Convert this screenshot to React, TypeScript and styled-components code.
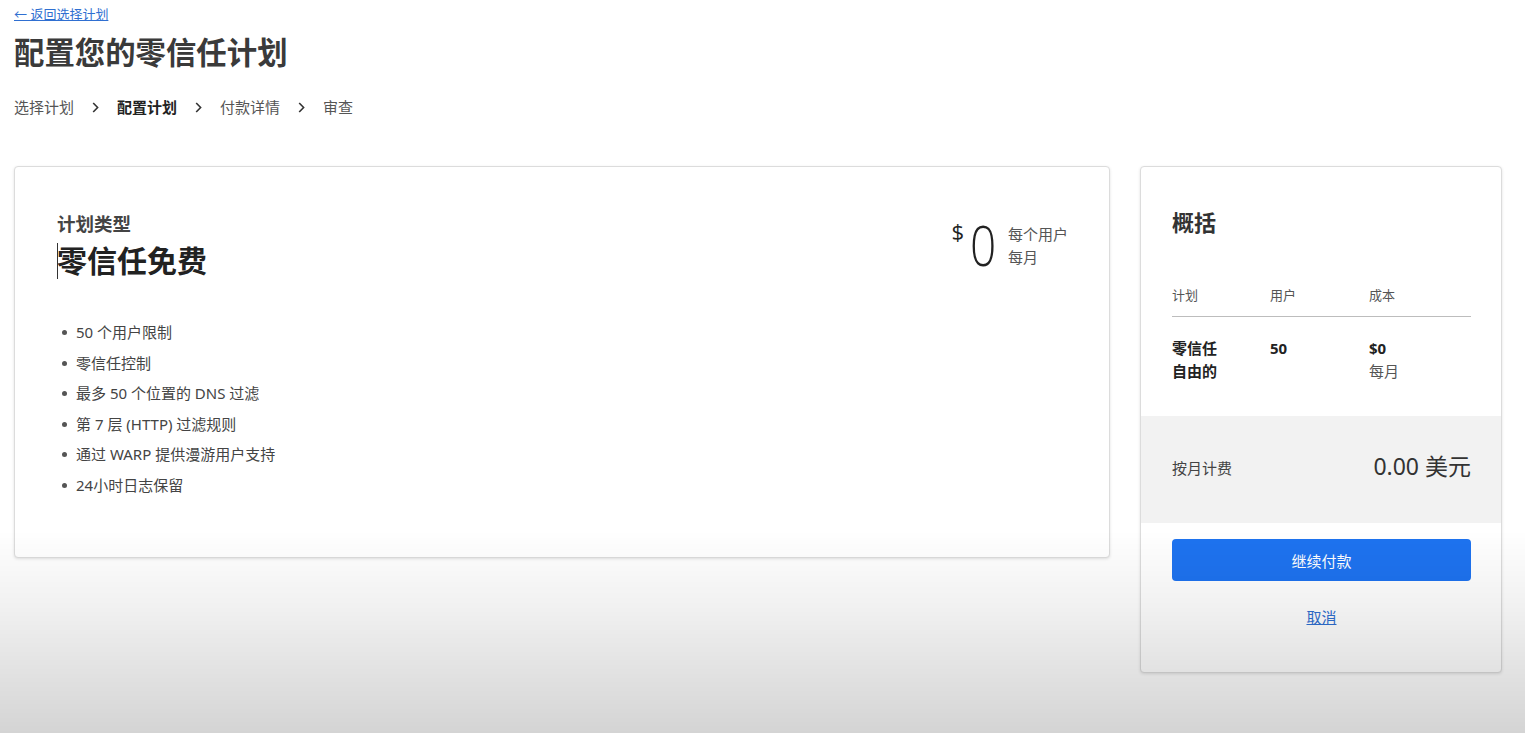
import React from "react";
import styled, { createGlobalStyle } from "styled-components";

const GlobalStyle = createGlobalStyle`
  html, body { margin: 0; padding: 0; background: #fff; }
  body {
    font-family: "Noto Sans", "Noto Sans CJK SC", sans-serif;
    color: #333;
    -webkit-font-smoothing: antialiased;
  }
  * { box-sizing: border-box; }
`;

const Page = styled.div`
  padding: 0 23px 0 14px;
  min-height: 733px;
`;

const BackLink = styled.a`
  display: inline-block;
  margin-top: 5px;
  font-size: 13px;
  line-height: 18px;
  color: #2f6fd1;
  text-decoration: underline;
  cursor: pointer;
`;

const Title = styled.h1`
  margin: 9px 0 0;
  font-size: 30.4px;
  line-height: 40px;
  font-weight: 700;
  color: #3a3a3a;
`;

const Crumbs = styled.nav`
  display: flex;
  align-items: center;
  gap: 18px;
  margin-top: 23px;
  height: 22px;
`;

const Crumb = styled.span<{ $active?: boolean }>`
  font-size: 15px;
  line-height: 22px;
  color: ${(p) => (p.$active ? "#222" : "#555")};
  font-weight: ${(p) => (p.$active ? 700 : 400)};
`;

const Chevron = () => (
  <svg width="7" height="11" viewBox="0 0 7 11" fill="none">
    <path d="M1.2 1 L5.6 5.5 L1.2 10" stroke="#333" strokeWidth="1.6" />
  </svg>
);

const Row = styled.div`
  display: flex;
  align-items: flex-start;
  gap: 30px;
  margin-top: 48px;
`;

const Card = styled.section`
  background: #fff;
  border: 1px solid #dcdcdc;
  border-radius: 4px;
  box-shadow: 0 1px 3px rgba(0, 0, 0, 0.12);
`;

const PlanCard = styled(Card)`
  flex: 1;
  padding: 44px 41px 56px 42px;
`;

const PlanHeader = styled.div`
  display: flex;
  justify-content: space-between;
  align-items: flex-start;
`;

const PlanLabel = styled.div`
  font-size: 18.5px;
  line-height: 26px;
  font-weight: 700;
  color: #444;
`;

const PlanName = styled.div`
  position: relative;
  margin-top: 5px;
  font-size: 30px;
  line-height: 38px;
  font-weight: 700;
  color: #222;
`;

const Caret = styled.span`
  position: absolute;
  left: 0;
  top: 1px;
  width: 1px;
  height: 36px;
  background: #333;
`;

const Price = styled.div`
  display: flex;
  align-items: flex-start;
  margin-top: 5px;
`;

const Dollar = styled.span`
  font-family: "Open Sans", sans-serif;
  font-weight: 400;
  font-size: 22px;
  line-height: 22px;
  margin-top: 4px;
  color: #222;
`;

const Zero = styled.span`
  display: inline-block;
  font-family: "Open Sans", sans-serif;
  font-weight: 300;
  font-size: 56px;
  line-height: 56px;
  margin-left: 6px;
  margin-right: -6px;
  transform: scaleX(0.82);
  transform-origin: left center;
  color: #222;
`;

const PriceNote = styled.div`
  margin-left: 12px;
  margin-top: 7px;
  font-size: 15px;
  line-height: 23px;
  color: #555;
`;

const Features = styled.ul`
  margin: 37px 0 0;
  padding: 0 0 0 19px;
  list-style: none;
`;

const Feature = styled.li`
  position: relative;
  font-size: 15px;
  line-height: 30.6px;
  color: #444;
  &::before {
    content: "";
    position: absolute;
    left: -14px;
    top: 13px;
    width: 5px;
    height: 5px;
    border-radius: 50%;
    background: #555;
  }
`;

const SummaryCard = styled(Card)`
  width: 362px;
  flex-shrink: 0;
  overflow: hidden;
`;

const SummaryTop = styled.div`
  padding: 40px 30px 33px 31px;
`;

const SummaryTitle = styled.h2`
  margin: 0;
  font-size: 22px;
  line-height: 30px;
  font-weight: 700;
  color: #333;
`;

const Table = styled.div`
  margin-top: 49px;
`;

const TableRow = styled.div<{ $head?: boolean }>`
  display: grid;
  grid-template-columns: 98px 99px 1fr;
  padding: ${(p) => (p.$head ? "0 0 12px" : "20px 0 0")};
  border-bottom: ${(p) => (p.$head ? "1px solid #bdbdbd" : "none")};
`;

const HeadCell = styled.div`
  font-size: 13px;
  line-height: 18px;
  color: #555;
`;

const Cell = styled.div<{ $bold?: boolean }>`
  font-size: 15px;
  line-height: 23px;
  font-weight: ${(p) => (p.$bold ? 700 : 400)};
  color: ${(p) => (p.$bold ? "#222" : "#555")};
`;

const Strong = styled.div`
  font-weight: 700;
  color: #222;
`;

const Billing = styled.div`
  height: 107px;
  background: #f2f2f2;
  display: flex;
  align-items: center;
  justify-content: space-between;
  padding: 0 30px 8px 31px;
`;

const BillingLabel = styled.span`
  font-size: 15px;
  line-height: 22px;
  color: #444;
  margin-top: 4px;
`;

const BillingAmount = styled.span`
  font-size: 23px;
  line-height: 30px;
  color: #333;
`;

const Actions = styled.div`
  display: flex;
  flex-direction: column;
  align-items: center;
  padding: 16px 30px 44px 31px;
`;

const PrimaryButton = styled.button`
  width: 100%;
  height: 42px;
  border: none;
  border-radius: 4px;
  background: #1e73f0;
  color: #fff;
  font-family: inherit;
  font-size: 15px;
  cursor: pointer;
`;

const CancelLink = styled.a`
  margin-top: 25px;
  font-size: 15px;
  line-height: 22px;
  color: #2f6fd1;
  text-decoration: underline;
  cursor: pointer;
`;

const Fade = styled.div`
  position: fixed;
  left: 0;
  right: 0;
  bottom: 0;
  height: 203px;
  pointer-events: none;
  background: linear-gradient(to bottom, rgba(0, 0, 0, 0) 0%, rgba(0, 0, 0, 0.05) 35%, rgba(0, 0, 0, 0.17) 100%);
`;

const features = [
  "50 个用户限制",
  "零信任控制",
  "最多 50 个位置的 DNS 过滤",
  "第 7 层 (HTTP) 过滤规则",
  "通过 WARP 提供漫游用户支持",
  "24小时日志保留",
];

export default function App() {
  return (
    <>
      <GlobalStyle />
      <Page>
        <BackLink>← 返回选择计划</BackLink>
        <Title>配置您的零信任计划</Title>
        <Crumbs>
          <Crumb>选择计划</Crumb>
          <Chevron />
          <Crumb $active>配置计划</Crumb>
          <Chevron />
          <Crumb>付款详情</Crumb>
          <Chevron />
          <Crumb>审查</Crumb>
        </Crumbs>
        <Row>
          <PlanCard>
            <PlanHeader>
              <div>
                <PlanLabel>计划类型</PlanLabel>
                <PlanName>
                  <Caret />
                  零信任免费
                </PlanName>
              </div>
              <Price>
                <Dollar>$</Dollar>
                <Zero>0</Zero>
                <PriceNote>
                  每个用户
                  <br />
                  每月
                </PriceNote>
              </Price>
            </PlanHeader>
            <Features>
              {features.map((f) => (
                <Feature key={f}>{f}</Feature>
              ))}
            </Features>
          </PlanCard>
          <SummaryCard>
            <SummaryTop>
              <SummaryTitle>概括</SummaryTitle>
              <Table>
                <TableRow $head>
                  <HeadCell>计划</HeadCell>
                  <HeadCell>用户</HeadCell>
                  <HeadCell>成本</HeadCell>
                </TableRow>
                <TableRow>
                  <Cell $bold>
                    零信任
                    <br />
                    自由的
                  </Cell>
                  <Cell $bold>50</Cell>
                  <Cell>
                    <Strong>$0</Strong>
                    每月
                  </Cell>
                </TableRow>
              </Table>
            </SummaryTop>
            <Billing>
              <BillingLabel>按月计费</BillingLabel>
              <BillingAmount>0.00 美元</BillingAmount>
            </Billing>
            <Actions>
              <PrimaryButton>继续付款</PrimaryButton>
              <CancelLink>取消</CancelLink>
            </Actions>
          </SummaryCard>
        </Row>
      </Page>
      <Fade />
    </>
  );
}
